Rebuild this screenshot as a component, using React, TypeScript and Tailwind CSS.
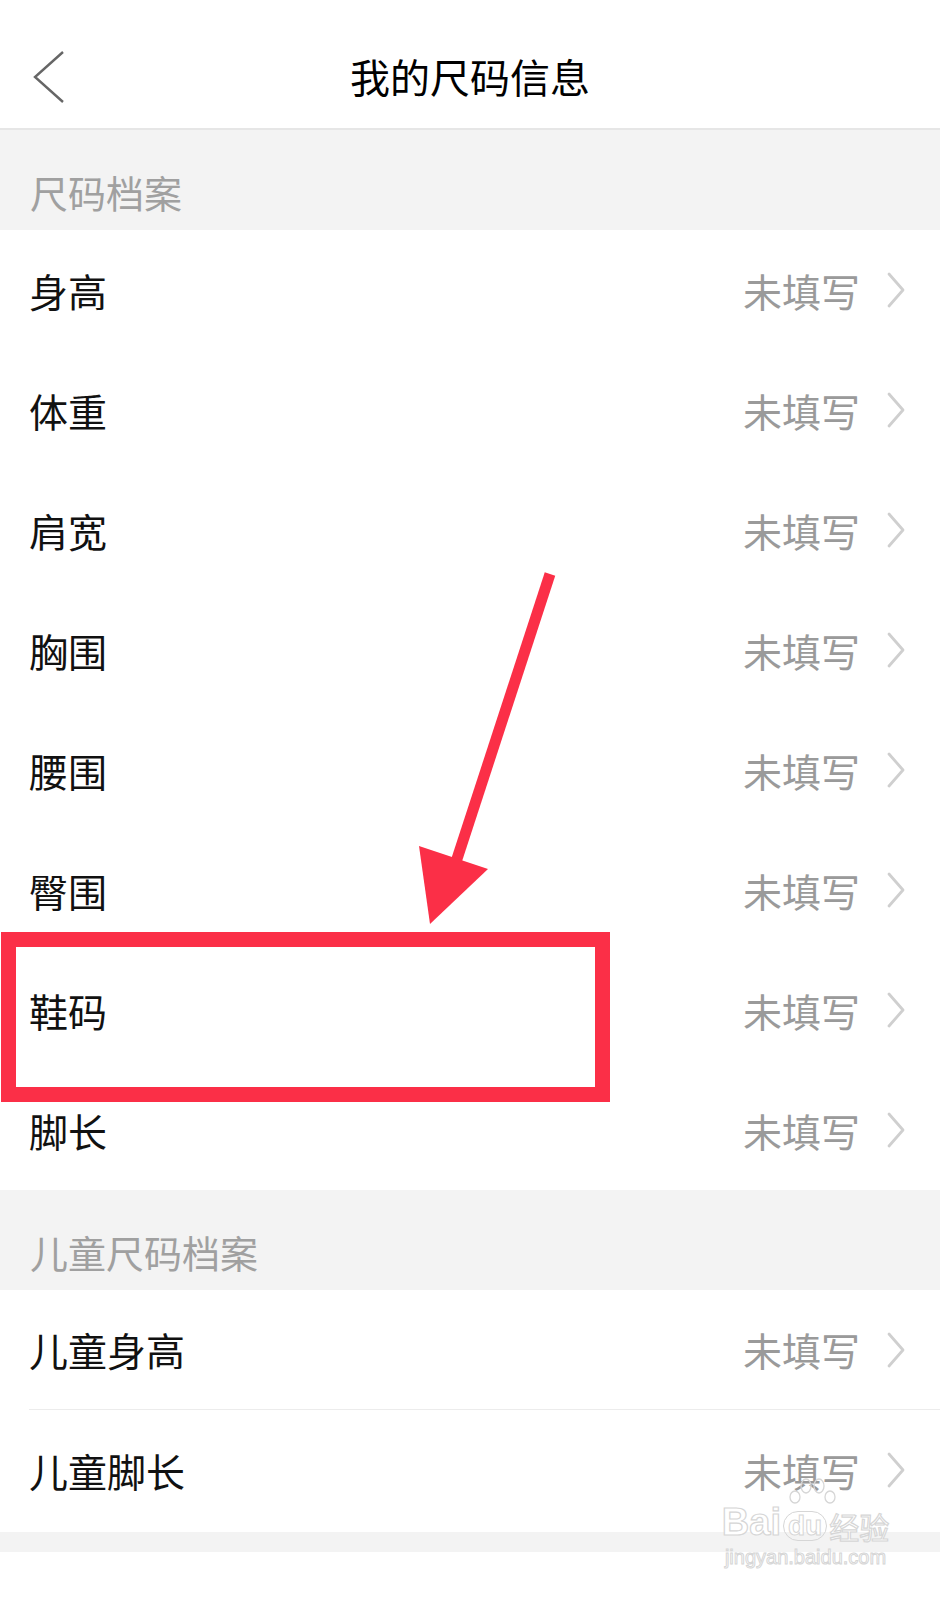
import React from 'react';

const rows1 = ['身高', '体重', '肩宽', '胸围', '腰围', '臀围', '鞋码', '脚长'];
const rows2 = ['儿童身高', '儿童脚长'];

const Chevron = () => (
  <svg width="18" height="36" viewBox="0 0 18 36" fill="none">
    <path d="M2 2 L16 18 L2 34" stroke="#cfcfcf" strokeWidth="2.8" strokeLinecap="round" strokeLinejoin="round" />
  </svg>
);

const Row = ({ label, line }: { label: string; line?: boolean }) => (
  <div className="h-[120px] pl-[29px] flex">
    <div className={`flex-1 flex items-center justify-between pr-[35px] ${line ? 'border-b border-[#ececec]' : ''}`}>
      <span className="text-[39px] text-[#111]">{label}</span>
      <div className="flex items-center gap-[27px]">
        <span className="text-[39px] text-[#9a9a9a]">未填写</span>
        <Chevron />
      </div>
    </div>
  </div>
);

const SectionTitle = ({ title }: { title: string }) => (
  <div className="h-[100px] bg-[#f3f3f3] flex items-center pl-[30px] pt-[22px]">
    <span className="text-[38px] text-[#a0a0a0]">{title}</span>
  </div>
);

export default function App() {
  return (
    <div
      className="relative w-[940px] h-[1600px] bg-white overflow-hidden"
      style={{ fontFamily: '"Noto Sans CJK SC", "Noto Sans", sans-serif' }}
    >
      {/* Header */}
      <div className="h-[130px] pt-[24px] border-b-2 border-[#e6e6e6] grid grid-cols-[120px_1fr_120px] items-center">
        <div className="pl-[33px] pt-[2px]">
          <svg width="32" height="52" viewBox="0 0 32 52" fill="none">
            <path d="M30 1 L2 26 L30 51" stroke="#666" strokeWidth="2.4" strokeLinejoin="miter" />
          </svg>
        </div>
        <div className="text-center text-[40px] text-black">我的尺码信息</div>
        <div />
      </div>

      <SectionTitle title="尺码档案" />
      {rows1.map((r) => (
        <Row key={r} label={r} />
      ))}

      <SectionTitle title="儿童尺码档案" />
      {rows2.map((r, i) => (
        <Row key={r} label={r} line={i === 0} />
      ))}
      <div className="h-[20px] mt-[2px] bg-[#f3f3f3]" />

      {/* annotation box */}
      <div className="absolute left-[1px] top-[932px] w-[609px] h-[170px] border-[15px] border-[#fb2f47]" />

      {/* annotation arrow */}
      <svg className="absolute left-0 top-0" width="940" height="1600" viewBox="0 0 940 1600">
        <line x1="550" y1="574" x2="456" y2="862" stroke="#fb2f47" strokeWidth="11" />
        <polygon points="419,846 488,869 430,924" fill="#fb2f47" />
      </svg>

      {/* watermark */}
      <div className="absolute left-[718px] top-[1503px] w-[175px] flex flex-col items-center">
        <div className="relative flex items-end text-[38px] leading-none font-bold text-white [-webkit-text-stroke:1.2px_#d6d6d6]" style={{ fontFamily: '"Liberation Sans", sans-serif' }}>
          <span>Bai</span>
          <span className="relative mx-[2px]">
            <svg className="absolute left-[4px] -top-[26px]" width="50" height="30" viewBox="0 0 50 30" fill="none" stroke="#d6d6d6" strokeWidth="1.3">
              <ellipse cx="8" cy="20" rx="5" ry="6" />
              <ellipse cx="19" cy="9" rx="5" ry="7" />
              <ellipse cx="32" cy="9" rx="5" ry="7" />
              <ellipse cx="43" cy="20" rx="5" ry="6" />
            </svg>
            <span className="inline-block rounded-full border-[1.3px] border-[#d6d6d6] px-[4px] text-[28px] [-webkit-text-stroke:1px_#d6d6d6]">du</span>
          </span>
          <span className="text-[30px] font-normal" style={{ fontFamily: '"Noto Sans CJK SC", sans-serif' }}>经验</span>
        </div>
        <div className="text-[20px] leading-none mt-[6px] text-white [-webkit-text-stroke:1px_#d6d6d6]" style={{ fontFamily: '"Liberation Sans", sans-serif' }}>
          jingyan.baidu.com
        </div>
      </div>
    </div>
  );
}
